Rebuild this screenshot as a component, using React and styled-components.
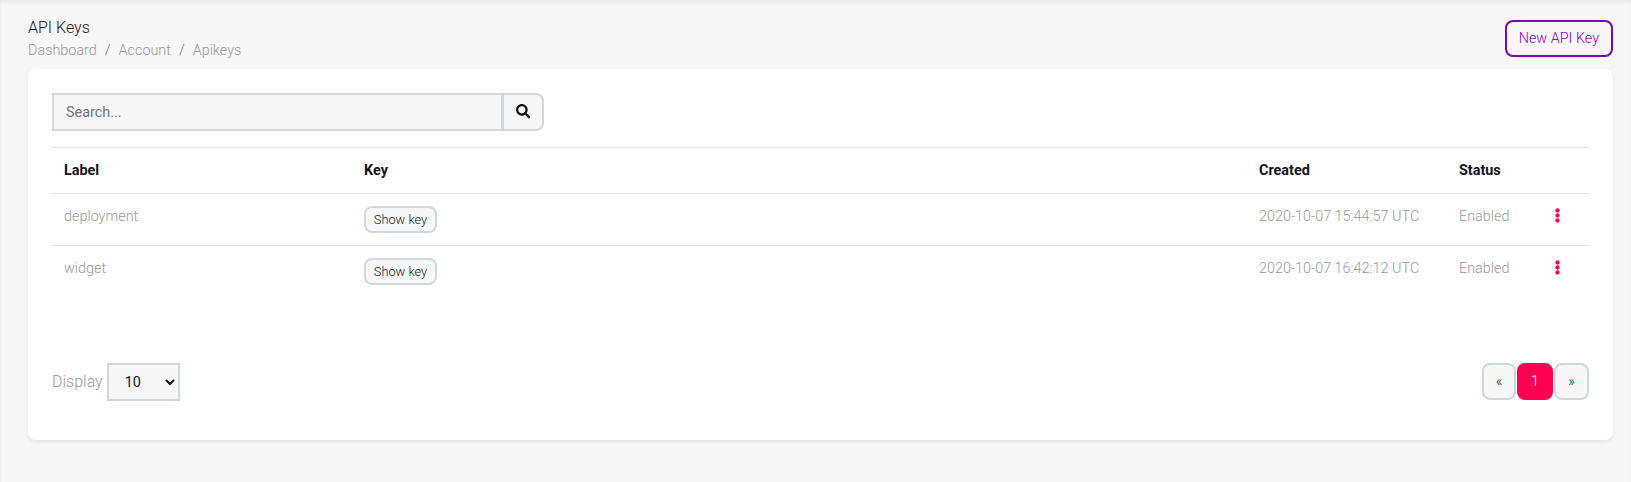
import React from 'react';
import styled, { createGlobalStyle } from 'styled-components';
import { FaSearch } from 'react-icons/fa';

const Global = createGlobalStyle`
  *, *::before, *::after { box-sizing: border-box; }
  body {
    margin: 0;
    background: #f7f7f7;
    font-family: Roboto, sans-serif;
    font-size: 16px;
    font-weight: 300;
    line-height: 1.5;
    color: #999;
  }
  button, input, select { font-family: inherit; margin: 0; }
`;

const Page = styled.main`
  height: 482px;
  padding: 16px 18px 0 28px;
  background: #f7f7f7;
  box-shadow: inset 0 4px 4px -2px rgba(0, 0, 0, 0.06), inset 2px 0 2px -1px rgba(0, 0, 0, 0.03);
`;

const Header = styled.header`
  display: flex;
  justify-content: space-between;
  height: 53px;
`;

const Title = styled.h1`
  margin: 0;
  font-size: 16px;
  font-weight: 300;
  line-height: 23px;
  color: #12141d;
`;

const Breadcrumb = styled.nav`
  display: flex;
  font-size: 14.4px;
  line-height: 24px;
`;

const Crumb = styled.span`
  & + &::before {
    content: '/';
    padding: 0 8px;
    color: #6c757d;
  }
`;

const NewButton = styled.button`
  height: 37px;
  margin-top: 4px;
  padding: 0 12px;
  border: 2px solid #7e00b3;
  border-radius: 8px;
  background: transparent;
  font-size: 14.4px;
  font-weight: 300;
  color: #8c00c6;
`;

const Card = styled.section`
  height: 371px;
  padding: 24px;
  border-radius: 8px;
  background: #fff;
  box-shadow: 0 2px 4px rgba(0, 0, 0, 0.08);
`;

const SearchGroup = styled.form`
  display: flex;
  width: 492px;
  height: 38px;
`;

const SearchInput = styled.input`
  flex: 1;
  min-width: 0;
  padding: 0 12px;
  border: 2px solid #d1d7df;
  border-radius: 0;
  background: #f7f7f7;
  font-size: 14.4px;
  font-weight: 400;
  &::placeholder { color: #6c757d; opacity: 1; }
`;

const SearchButton = styled.button`
  display: flex;
  align-items: center;
  justify-content: center;
  width: 42px;
  margin-left: -1px;
  padding: 0 0 1px;
  border: 2px solid #d1d7df;
  border-radius: 0 8px 8px 0;
  background: #f7f7f7;
  color: #12141d;
  font-size: 14.4px;
`;

const Table = styled.table`
  width: 100%;
  margin-top: 16px;
  border-spacing: 0;
  table-layout: fixed;
  font-size: 14.4px;
  line-height: 21px;
`;

const HeadCell = styled.th`
  width: ${({ $width }) => $width || 'auto'};
  height: 46px;
  padding: 0 12px;
  border-top: 1px solid #e5e5e6;
  text-align: left;
  font-weight: 700;
  color: #12141d;
`;

const Cell = styled.td`
  height: 52px;
  padding: 12px 12px 0;
  border-top: 1px solid #e5e5e6;
  vertical-align: top;
`;

const ShowKey = styled.button`
  display: block;
  width: 73px;
  height: 27px;
  padding: 0;
  border: 2px solid #d1d7df;
  border-radius: 8px;
  background: #f7f7f7;
  font-size: 12.8px;
  font-weight: 300;
  color: #12141d;
`;

const MenuCell = styled(Cell)`
  padding: 14px 9px 0;
`;

const Dots = styled.svg`
  display: block;
  width: 5px;
  height: 15px;
  fill: #ff0052;
`;

const Footer = styled.footer`
  display: flex;
  justify-content: space-between;
  margin-top: 66px;
`;

const Display = styled.label`
  display: flex;
  gap: 4px;
  line-height: 37px;
`;

const SizeSelect = styled.select`
  width: 73px;
  height: 38px;
  padding: 0 0 0 12px;
  border: 2px solid #d1d7df;
  border-radius: 0;
  background: #f7f7f7;
  font-size: 14.4px;
  font-weight: 400;
  color: #12141d;
`;

const Pagination = styled.div`
  display: flex;
  gap: 1px;
  height: 37px;
`;

const PageButton = styled.button`
  width: ${({ $width }) => $width};
  padding: 0 0 1px;
  border: 2px solid ${({ $active }) => ($active ? '#ff0052' : '#d1d7df')};
  border-radius: 8px;
  background: ${({ $active }) => ($active ? '#ff0052' : '#f7f7f7')};
  font-size: 14.4px;
  font-weight: 300;
  color: ${({ $active }) => ($active ? '#fff' : '#12141d')};
`;

const keys = [
  { label: 'deployment', created: '2020-10-07 15:44:57 UTC', status: 'Enabled' },
  { label: 'widget', created: '2020-10-07 16:42:12 UTC', status: 'Enabled' },
];

function MenuDots() {
  return (
    <Dots viewBox="0 0 5 15" aria-label="Actions">
      <circle cx="2.5" cy="2.5" r="2.15" />
      <circle cx="2.5" cy="7.5" r="2.15" />
      <circle cx="2.5" cy="12.5" r="2.15" />
    </Dots>
  );
}

export default function App() {
  return (
    <>
      <Global />
      <Page>
        <Header>
          <div>
            <Title>API Keys</Title>
            <Breadcrumb>
              <Crumb>Dashboard</Crumb>
              <Crumb>Account</Crumb>
              <Crumb>Apikeys</Crumb>
            </Breadcrumb>
          </div>
          <NewButton>New API Key</NewButton>
        </Header>
        <Card>
          <SearchGroup>
            <SearchInput placeholder="Search..." />
            <SearchButton type="button" aria-label="Search"><FaSearch /></SearchButton>
          </SearchGroup>
          <Table>
            <thead>
              <tr>
                <HeadCell $width="300px">Label</HeadCell>
                <HeadCell>Key</HeadCell>
                <HeadCell $width="200px">Created</HeadCell>
                <HeadCell $width="99px">Status</HeadCell>
                <HeadCell $width="43px" />
              </tr>
            </thead>
            <tbody>
              {keys.map((k) => (
                <tr key={k.label}>
                  <Cell>{k.label}</Cell>
                  <Cell><ShowKey>Show key</ShowKey></Cell>
                  <Cell>{k.created}</Cell>
                  <Cell>{k.status}</Cell>
                  <MenuCell><MenuDots /></MenuCell>
                </tr>
              ))}
            </tbody>
          </Table>
          <Footer>
            <Display>
              Display
              <SizeSelect defaultValue="10">
                <option>10</option>
                <option>25</option>
                <option>50</option>
              </SizeSelect>
            </Display>
            <Pagination>
              <PageButton $width="34px">«</PageButton>
              <PageButton $width="36px" $active>1</PageButton>
              <PageButton $width="35px">»</PageButton>
            </Pagination>
          </Footer>
        </Card>
      </Page>
    </>
  );
}
